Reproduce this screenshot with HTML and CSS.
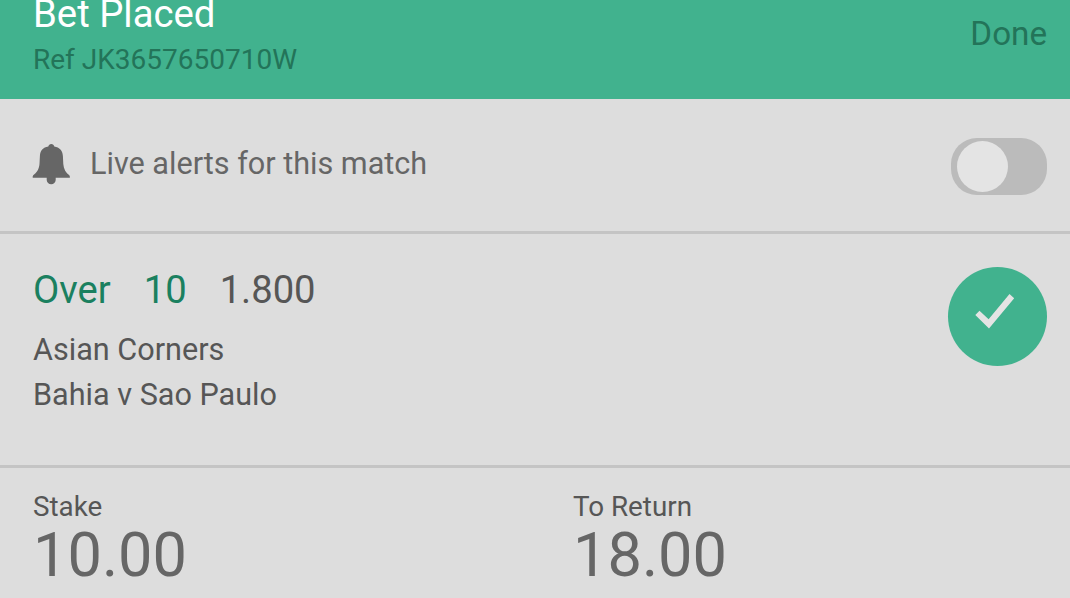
FILE: index.html
```html
<!DOCTYPE html>
<html lang="en">
<head>
<meta charset="utf-8">
<title>Bet Placed</title>
<link rel="stylesheet" href="styles.css">
</head>
<body>
<header class="header">
  <div class="heading">
    <h1 class="title">Bet Placed</h1>
    <p class="reference">Ref JK3657650710W</p>
  </div>
  <a class="done">Done</a>
</header>
<section class="alerts">
  <svg class="bell" viewBox="0 0 38 42" aria-hidden="true"><path d="M19.3 0C17.700 0 16.700 1 16.300 2.600C11 3.400 8.200 6.500 7.900 12L7.500 20C7.200 25 4.500 29 1.200 31.300Q.5 32 .7 33.700H14.700V36C14.900 38.500 16.700 40.200 19.200 40.200S23.500 38.500 23.700 36V33.700H37.900Q38 32 37.300 31.300C34 29 31.600 25 31.300 20L30.900 12C30.600 6.500 27.500 3.400 22.300 2.600C21.900 1 20.900 0 19.300 0z"/></svg>
  <span class="alerts-label">Live alerts for this match</span>
  <span class="toggle"><span class="knob"></span></span>
</section>
<section class="selection">
  <div class="details">
    <div class="pick"><span class="green">Over</span><span class="green">10</span><span>1.800</span></div>
    <p class="market">Asian Corners</p>
    <p class="market">Bahia v Sao Paulo</p>
  </div>
  <div class="status"><svg class="check" viewBox="0 0 99 99" aria-hidden="true"><path d="M27.300 48L31.500 43.700L40.600 52.300L61.500 27L66.200 31.200L41 61.500z"/></svg></div>
</section>
<section class="totals">
  <div class="total"><span class="label">Stake</span><span class="amount">10.00</span></div>
  <div class="total"><span class="label">To Return</span><span class="amount">18.00</span></div>
</section>
</body>
</html>
```
FILE: styles.css
```css
* { box-sizing: border-box; }
body {
  margin: 0;
  height: 598px;
  overflow: hidden;
  background: #ddd;
  color: #565656;
  font-family: Roboto, "Liberation Sans", sans-serif;
}
h1, p { margin: 0; font-weight: 400; }
.header {
  display: flex;
  justify-content: space-between;
  height: 99px;
  padding: 0 23px 0 33px;
  background: #41b28e;
  color: #237459;
}
.heading { margin-top: -9px; }
.title { font-size: 38.3px; line-height: 46px; color: #fff; }
.reference { margin-top: 5px; font-size: 28px; line-height: 36px; }
.done { margin-top: 14px; font-size: 33.2px; line-height: 40px; }
.alerts {
  display: flex;
  align-items: center;
  height: 135px;
  padding: 0 23px 0 32px;
  border-bottom: 3px solid #c4c4c4;
}
.bell { width: 38px; height: 42px; fill: #666; }
.alerts-label { margin: -2px 0 0 20px; font-size: 30.6px; line-height: 40px; color: #666; }
.toggle {
  width: 96px;
  height: 57px;
  margin: 2px 0 0 auto;
  padding: 3px 6px;
  border-radius: 26px;
  background: #bbb;
}
.knob { display: block; width: 51px; height: 51px; border-radius: 50%; background: #e4e4e4; }
.selection {
  display: flex;
  justify-content: space-between;
  height: 234px;
  padding: 33px 23px 0 33px;
  border-bottom: 3px solid #c4c4c4;
}
.pick { display: flex; gap: 33px; font-size: 38.2px; line-height: 46px; margin-bottom: 14px; }
.green { color: #1a805f; }
.market { font-size: 30.6px; line-height: 45px; }
.status { width: 99px; height: 99px; border-radius: 50%; background: #41b28e; }
.check { display: block; fill: #e4e4e4; }
.totals { display: grid; grid-template-columns: 540px 1fr; padding: 22px 0 0 33px; }
.total { display: flex; flex-direction: column; }
.label { font-size: 27.8px; line-height: 34px; }
.amount { font-size: 61.3px; line-height: 62px; color: #666; }
```
